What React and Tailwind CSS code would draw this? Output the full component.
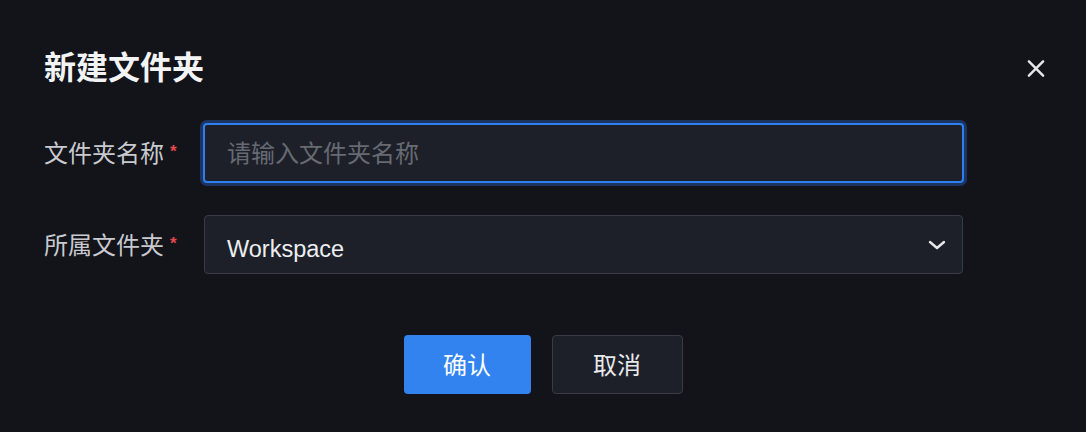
import { useState } from 'react';

export default function App() {
  const [name, setName] = useState('');

  return (
    <div
      className="w-[1086px] h-[432px] bg-[#12141a] pl-[44px] pr-[41px] pt-[36px] overflow-hidden"
      style={{ fontFamily: '"Liberation Sans", "Noto Sans CJK SC", sans-serif' }}
    >
      {/* Header */}
      <div className="flex justify-between items-center h-[64px]">
        <h1 className="text-[32px] font-bold text-[#f2f3f5] leading-none">新建文件夹</h1>
        <button className="w-[18px] h-[18px] flex items-center justify-center text-[#e6e7ea]">
          <svg width="19" height="19" viewBox="0 0 19 19" fill="none" stroke="currentColor" strokeWidth="2.6" strokeLinecap="round">
            <path d="M2 2l15 15M17 2L2 17" />
          </svg>
        </button>
      </div>

      {/* Form */}
      <div className="mt-[23px] flex flex-col gap-[32px]">
        <div className="flex items-center">
          <label className="w-[159px] flex items-center text-[24px] text-[#c9cacf] pt-[2px]">
            文件夹名称<span className="ml-[6px] text-[17px] font-bold text-[#e5484d] -mt-[4px]">*</span>
          </label>
          <input
            value={name}
            onChange={(e) => setName(e.target.value)}
            placeholder="请输入文件夹名称"
            className="w-[761px] h-[60px] px-[22px] pt-[2px] rounded-[4px] bg-[#1d2029] border-2 border-[#2f7ef0] ring-[3px] ring-[#1c3461] outline-none text-[24px] text-[#e8e9ec] placeholder:text-[#676a72]"
          />
        </div>
        <div className="flex items-center">
          <label className="w-[160px] flex items-center text-[24px] text-[#c9cacf] pt-[3px]">
            所属文件夹<span className="ml-[6px] text-[17px] font-bold text-[#e5484d] -mt-[4px]">*</span>
          </label>
          <div className="w-[759px] h-[59px] pl-[22px] pr-[16px] rounded-[4px] bg-[#1d2029] border border-[#393c47] flex items-center justify-between">
            <span className="text-[23.5px] text-[#eceef0] pt-[10px]">Workspace</span>
            <svg width="18" height="10" viewBox="0 0 18 10" fill="none" stroke="#e6e7ea" strokeWidth="2.4" strokeLinecap="round" strokeLinejoin="round">
              <path d="M2 2l7 6 7-6" />
            </svg>
          </div>
        </div>
      </div>

      {/* Actions */}
      <div className="mt-[61px] flex justify-center gap-[21px] -ml-[44px] -mr-[41px]">
        <button className="w-[127px] h-[59px] pt-[2px] rounded-[4px] bg-[#3282f0] text-[24px] text-white">确认</button>
        <button className="w-[131px] h-[59px] pt-[2px] rounded-[4px] bg-[#1d2029] border border-[#393c47] text-[24px] text-[#e8e9ec]">取消</button>
      </div>
    </div>
  );
}
